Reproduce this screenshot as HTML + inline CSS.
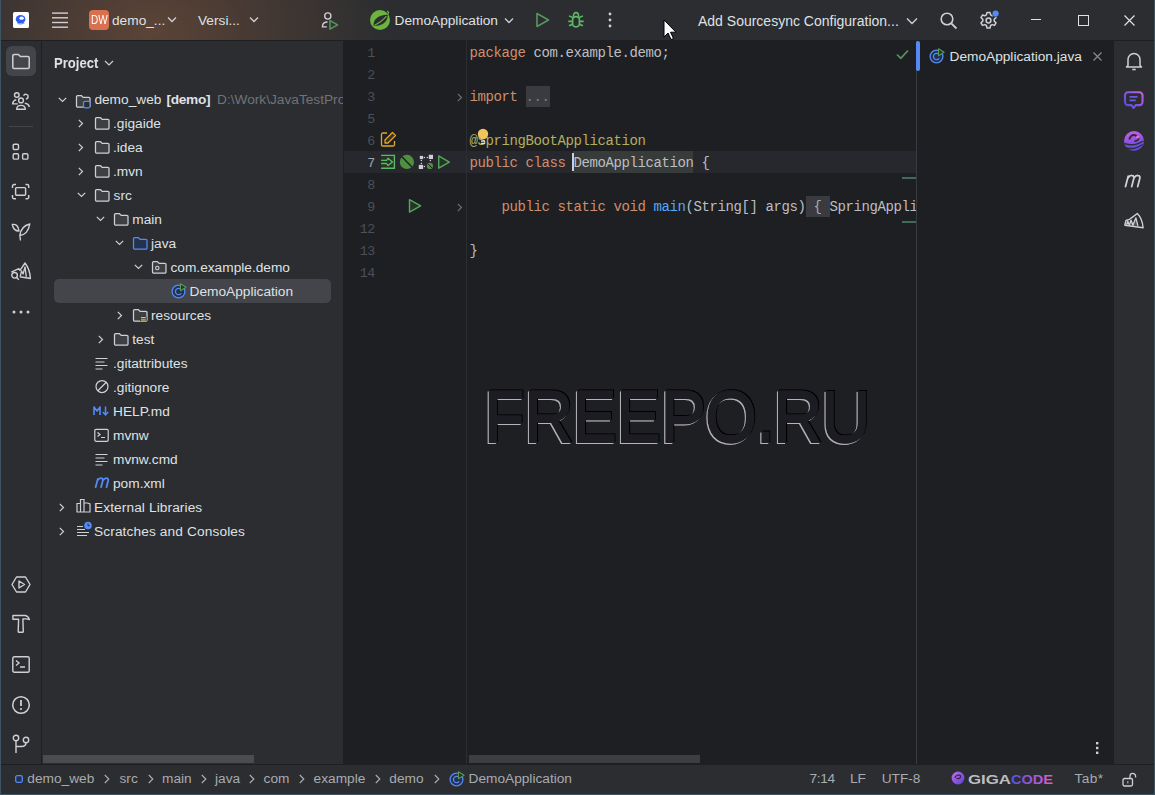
<!DOCTYPE html>
<html><head><meta charset="utf-8">
<style>
*{margin:0;padding:0;box-sizing:border-box}
html,body{width:1155px;height:795px;overflow:hidden;background:#2b2d30}
body{position:relative;font-family:"Liberation Sans",sans-serif;font-size:13.7px;color:#dfe1e5}
.a{position:absolute}
.t{position:absolute;white-space:nowrap;line-height:1}
svg{position:absolute;overflow:visible}
.m{position:absolute;white-space:pre;line-height:1;font-family:"Liberation Mono",monospace;font-size:14px;letter-spacing:-0.4px;color:#bcbec4}
</style></head><body>
<div class="a" style="left:0;top:0;width:1155px;height:40px;background:#2b2d30;overflow:hidden"><div class="a" style="left:0;top:0;width:1155px;height:40px;background:radial-gradient(ellipse 240px 170px at 150px 30px,rgba(94,69,55,0.95) 0%,rgba(84,64,53,0.7) 40%,rgba(43,45,48,0) 100%)"></div></div>
<div class="a" style="left:0;top:40px;width:1155px;height:1px;background:#1e1f22"></div>
<div class="a" style="left:0;top:41px;width:41px;height:723px;background:#2b2d30"></div>
<div class="a" style="left:41px;top:41px;width:1px;height:723px;background:#1e1f22"></div>
<div class="a" style="left:42px;top:41px;width:301px;height:723px;background:#2b2d30"></div>
<div class="a" style="left:343px;top:41px;width:573px;height:723px;background:#1e1f22"></div>
<div class="a" style="left:916px;top:41px;width:1px;height:723px;background:#393b40"></div>
<div class="a" style="left:917px;top:41px;width:196px;height:723px;background:#1e1f22"></div>
<div class="a" style="left:1113px;top:41px;width:1px;height:723px;background:#1e1f22"></div>
<div class="a" style="left:1114px;top:41px;width:41px;height:723px;background:#2b2d30"></div>
<div class="a" style="left:0;top:764px;width:1155px;height:1px;background:#1e1f22"></div>
<div class="a" style="left:0;top:765px;width:1155px;height:30px;background:#2b2d30"></div>
<svg style="left:13px;top:12px;" width="16" height="16" viewBox="0 0 16 16"><rect x="0" y="0" width="16" height="16" rx="1.5" fill="#fff"/><ellipse cx="7.6" cy="7.2" rx="4.8" ry="4.2" fill="#2f5cf0"/><ellipse cx="8.6" cy="6.2" rx="2.2" ry="1.6" fill="#fff"/><path d="M4.5 11.5q3 1.5 7-0.5" stroke="#6f8ff5" stroke-width="1" fill="none"/></svg>
<svg style="left:52px;top:12px;" width="16" height="16" viewBox="0 0 16 16"><rect x="0" y="0.4" width="16" height="1.4" fill="#ced0d6"/><rect x="0" y="5.1" width="16" height="1.4" fill="#ced0d6"/><rect x="0" y="9.8" width="16" height="1.4" fill="#ced0d6"/><rect x="0" y="14.5" width="16" height="1.4" fill="#ced0d6"/></svg>
<div class="a" style="left:89px;top:10px;width:20px;height:20px;border-radius:4px;background:#d9704f"></div>
<div class="t" style="left:89px;top:14.2px;width:20px;text-align:center;font-size:12.5px;color:#fff;letter-spacing:0px;transform:scaleX(0.8)">DW</div>
<div class="t" style="left:112.0px;top:14.16px;font-size:13.7px;color:#dfe1e5;font-weight:normal;">demo_...</div>
<svg style="left:167px;top:16px;" width="10" height="7" viewBox="0 0 10 7"><path d="M1 1.5l4 4 4-4" stroke="#ced0d6" stroke-width="1.3" fill="none"/></svg>
<div class="t" style="left:198.0px;top:14.16px;font-size:13.7px;color:#dfe1e5;font-weight:normal;">Versi...</div>
<svg style="left:249px;top:16px;" width="10" height="7" viewBox="0 0 10 7"><path d="M1 1.5l4 4 4-4" stroke="#ced0d6" stroke-width="1.3" fill="none"/></svg>
<svg style="left:320px;top:11px;" width="20" height="20" viewBox="0 0 20 20"><circle cx="7.8" cy="5" r="3.1" stroke="#ced0d6" stroke-width="1.35" fill="none"/><path d="M7.5 11c-3.2 0-5 1.6-5 4.2v.6h4.3" stroke="#ced0d6" stroke-width="1.35" fill="none"/><path d="M10 9.6v8.6l7.6-4.3z" stroke="#57965c" stroke-width="1.5" fill="#2c3a2e" stroke-linejoin="round"/></svg>
<svg style="left:369px;top:9px;" width="22" height="22" viewBox="0 0 22 22"><circle cx="11" cy="11" r="10" fill="#6cb33f"/><path d="M19.2 2.2l.3 2.2"/><path d="M4.5 16.8C4 11 8.5 6 18.8 5.5 18.8 13.5 13 17 4.5 16.8z" fill="#2b2d30"/><path d="M5.5 16.2Q12 13.5 17.5 7.2" stroke="#6cb33f" stroke-width="1.1" fill="none"/><path d="M18.3 1.8l1.2 1.6-.9 2.4" stroke="#6cb33f" stroke-width="1.2" fill="none"/></svg>
<div class="t" style="left:394.5px;top:14.16px;font-size:13.7px;color:#dfe1e5;font-weight:normal;">DemoApplication</div>
<svg style="left:504px;top:17px;" width="10" height="7" viewBox="0 0 10 7"><path d="M1 1.5l4 4 4-4" stroke="#ced0d6" stroke-width="1.3" fill="none"/></svg>
<svg style="left:535px;top:12px;" width="16" height="16" viewBox="0 0 16 16"><path d="M2 1.5v13l11.5-6.5z" stroke="#57965c" stroke-width="1.6" fill="none" stroke-linejoin="round"/></svg>
<svg style="left:566px;top:11px;" width="19" height="18" viewBox="0 0 19 18"><rect x="6.6" y="5.6" width="6.8" height="10.3" rx="3.3" stroke="#5fb865" stroke-width="1.6" fill="none"/><path d="M7.4 5.8Q7.4 1.6 10 1.6 12.6 1.6 12.6 5.8" stroke="#5fb865" stroke-width="1.6" fill="none"/><path d="M3 5Q5 5.4 6.6 6.6M17 5Q15 5.4 13.4 6.6M2.3 10.4H6.6M13.4 10.4H17.7M3 14.8Q5 14 6.6 12.8M17 14.8Q15 14 13.4 12.8" stroke="#5fb865" stroke-width="1.6" fill="none"/></svg>
<svg style="left:608px;top:12px;" width="4" height="16" viewBox="0 0 4 16"><circle cx="2" cy="2" r="1.4" fill="#ced0d6"/><circle cx="2" cy="8" r="1.4" fill="#ced0d6"/><circle cx="2" cy="14" r="1.4" fill="#ced0d6"/></svg>
<svg style="left:662.6px;top:19px;" width="14" height="22" viewBox="0 0 14 22"><path d="M1 1v17l4-4 3 6.5 2.5-1-3-6.3h5.5z" fill="#fff" stroke="#000" stroke-width="1"/></svg>
<div class="t" style="left:698.0px;top:13.90px;font-size:14px;color:#dfe1e5;font-weight:normal;">Add Sourcesync Configuration...</div>
<svg style="left:906px;top:17px;" width="12" height="8" viewBox="0 0 12 8"><path d="M1 1.5l5 5 5-5" stroke="#ced0d6" stroke-width="1.4" fill="none"/></svg>
<svg style="left:939px;top:11px;" width="20" height="20" viewBox="0 0 20 20"><circle cx="8" cy="8" r="5.8" stroke="#ced0d6" stroke-width="1.6" fill="none"/><path d="M12.3 12.3l5.2 5.2" stroke="#ced0d6" stroke-width="1.8"/></svg>
<svg style="left:979px;top:11px;" width="20" height="20" viewBox="0 0 20 20"><path d="M8 1.5h3l.6 2.4 1.6.9 2.3-.8 1.5 2.6-1.8 1.7v1.8l1.8 1.7-1.5 2.6-2.3-.8-1.6.9-.6 2.5h-3l-.6-2.5-1.6-.9-2.3.8-1.5-2.6 1.8-1.7v-1.8l-1.8-1.7 1.5-2.6 2.3.8 1.6-.9z" stroke="#ced0d6" stroke-width="1.5" fill="none" stroke-linejoin="round"/><circle cx="9.5" cy="9.5" r="2.4" stroke="#ced0d6" stroke-width="1.5" fill="none"/><circle cx="16.6" cy="2.6" r="3.6" fill="#2b2d30"/><circle cx="16.6" cy="2.6" r="3.1" fill="#548af7"/></svg>
<div class="a" style="left:1031px;top:19px;width:10px;height:1.3px;background:#dfe1e5"></div>
<div class="a" style="left:1078px;top:15px;width:10.5px;height:10.5px;border:1.3px solid #dfe1e5"></div>
<svg style="left:1124px;top:15px;" width="11" height="11" viewBox="0 0 11 11"><path d="M0.5 0.5l10 10M10.5 0.5l-10 10" stroke="#dfe1e5" stroke-width="1.2"/></svg>
<div class="a" style="left:6px;top:46px;width:30px;height:30px;border-radius:6px;background:#43454a"></div>
<svg style="left:11px;top:53px;" width="20" height="17" viewBox="0 0 20 17"><path d="M1.8 2.8a1.3 1.3 0 0 1 1.3-1.3h4.3l2 2h7.5a1.3 1.3 0 0 1 1.3 1.3v9.4a1.3 1.3 0 0 1-1.3 1.3H3.1a1.3 1.3 0 0 1-1.3-1.3z" stroke="#ced0d6" stroke-width="1.5" fill="none" stroke-linejoin="round"/></svg>
<svg style="left:8px;top:86px;" width="26" height="28" viewBox="0 0 26 28"><circle cx="8.8" cy="9" r="2.3" stroke="#ced0d6" stroke-width="1.4" fill="none"/><circle cx="13" cy="14.4" r="2.4" stroke="#ced0d6" stroke-width="1.4" fill="none"/><path d="M15.6 9.8A2.3 2.3 0 1 1 17.8 12.9" stroke="#ced0d6" stroke-width="1.4" fill="none"/><path d="M9.8 17.9H4.6Q5 14.3 8.3 13.6M8.6 23.2Q9 19.4 13 19.4T17.4 23.2Z" stroke="#ced0d6" stroke-width="1.4" fill="none" stroke-linejoin="round"/><path d="M16.8 17.2Q20.6 17.5 21.4 21" stroke="#ced0d6" stroke-width="1.4" fill="none"/></svg>
<div class="a" style="left:9px;top:126px;width:24px;height:1px;background:#43454a"></div>
<svg style="left:12px;top:143px;" width="18" height="18" viewBox="0 0 18 18"><rect x="1.2" y="1.2" width="5.3" height="5.3" rx="1.2" stroke="#ced0d6" stroke-width="1.4" fill="none"/><rect x="1.2" y="10.8" width="5.3" height="5.3" rx="1.2" stroke="#ced0d6" stroke-width="1.4" fill="none"/><rect x="10.6" y="10.8" width="5.3" height="5.3" rx="1.2" stroke="#ced0d6" stroke-width="1.4" fill="none"/></svg>
<svg style="left:11px;top:183px;" width="20" height="18" viewBox="0 0 20 18"><rect x="4.6" y="4.6" width="10" height="7.6" rx="1" stroke="#ced0d6" stroke-width="1.45" fill="none"/><path d="M1.5 5V3A1.5 1.5 0 0 1 3 1.5H5M14.5 1.5h1.7A1.5 1.5 0 0 1 17.7 3V5M17.7 12v2.2a1.5 1.5 0 0 1-1.5 1.5H14.5M5 15.7H3A1.5 1.5 0 0 1 1.5 14.2V12" stroke="#ced0d6" stroke-width="1.45" fill="none"/></svg>
<svg style="left:8px;top:218px;" width="26" height="26" viewBox="0 0 26 26"><path d="M4.3 6.5Q10 5.5 11 13 5.5 13 4.3 6.5Z" stroke="#ced0d6" stroke-width="1.4" fill="none" stroke-linejoin="round"/><path d="M21.8 6Q13 8 11.8 17.5 20 16.5 21.8 6ZM11.8 17L12.5 22.5" stroke="#ced0d6" stroke-width="1.4" fill="none" stroke-linejoin="round"/></svg>
<svg style="left:8px;top:258px;" width="26" height="26" viewBox="0 0 26 26"><path d="M3.3 14.2L10.8 10.6 12 12.4 17 5Q22 11.5 22.4 20.5L11.8 18.8" stroke="#ced0d6" stroke-width="1.4" fill="none" stroke-linejoin="round"/><path d="M12.2 18.3L13.6 13 15.1 16 17 8.8 18.3 18.8" stroke="#ced0d6" stroke-width="1.3" fill="none" stroke-linejoin="round"/><circle cx="6.6" cy="17.3" r="2.8" stroke="#ced0d6" stroke-width="1.4" fill="none"/><path d="M8.6 19.5L10.8 21.8" stroke="#ced0d6" stroke-width="1.4"/></svg>
<svg style="left:12px;top:310px;" width="18" height="4" viewBox="0 0 18 4"><circle cx="2" cy="2" r="1.5" fill="#ced0d6"/><circle cx="9" cy="2" r="1.5" fill="#ced0d6"/><circle cx="16" cy="2" r="1.5" fill="#ced0d6"/></svg>
<svg style="left:11px;top:576px;" width="20" height="17" viewBox="0 0 20 17"><path d="M5.5 1h9l4.5 7.5-4.5 7.5h-9L1 8.5z" stroke="#ced0d6" stroke-width="1.4" fill="none" stroke-linejoin="round"/><path d="M8 5v7l5.5-3.5z" stroke="#ced0d6" stroke-width="1.4" fill="none" stroke-linejoin="round"/></svg>
<svg style="left:12px;top:614px;" width="18" height="20" viewBox="0 0 18 20"><path d="M0.9 1.5H13.3Q16.2 1.9 17.4 5.6 15.6 4.7 13 4.9H10.9L10.9 5.5 11.3 17.4Q11.3 18.3 10.4 18.3H7.1Q6.2 18.3 6.2 17.4L6.6 5.5 6.6 5.3H0.9Z" stroke="#ced0d6" stroke-width="1.4" fill="none" stroke-linejoin="round"/></svg>
<svg style="left:12px;top:656px;" width="18" height="17" viewBox="0 0 18 17"><rect x="0.8" y="0.8" width="16.4" height="15.4" rx="1.5" stroke="#ced0d6" stroke-width="1.4" fill="none"/><path d="M4 4.5l3 2.5-3 2.5M8 11h5" stroke="#ced0d6" stroke-width="1.4" fill="none"/></svg>
<svg style="left:11px;top:695px;" width="20" height="20" viewBox="0 0 20 20"><circle cx="10" cy="10" r="8.3" stroke="#ced0d6" stroke-width="1.5" fill="none"/><path d="M10 5v6" stroke="#ced0d6" stroke-width="1.8"/><circle cx="10" cy="14" r="1.1" fill="#ced0d6"/></svg>
<svg style="left:12px;top:734px;" width="18" height="20" viewBox="0 0 18 20"><circle cx="4" cy="4" r="2.7" stroke="#ced0d6" stroke-width="1.4" fill="none"/><circle cx="14" cy="6" r="2.7" stroke="#ced0d6" stroke-width="1.4" fill="none"/><path d="M4 6.7V19M4 12.5h5.5q4.5 0 4.5-4" stroke="#ced0d6" stroke-width="1.4" fill="none"/></svg>
<div class="t" style="left:54.3px;top:55.66px;font-size:14.4px;color:#dfe1e5;font-weight:bold;transform:scaleX(0.91);transform-origin:0 0">Project</div>
<svg style="left:104px;top:59.5px;" width="10" height="6" viewBox="0 0 10 6"><path d="M1 1l4 4 4-4" stroke="#ced0d6" stroke-width="1.2" fill="none"/></svg>
<div class="a" style="left:54px;top:279px;width:277px;height:24px;border-radius:5px;background:#43454a"></div>
<svg style="left:58px;top:96.5px;" width="9" height="6" viewBox="0 0 9 6"><path d="M0.8 0.8l3.7 3.7 3.7-3.7" stroke="#ced0d6" stroke-width="1.2" fill="none"/></svg>
<svg style="left:75px;top:93.5px;" width="16" height="14" viewBox="0 0 16 14"><path d="M1.5 2.7a1.2 1.2 0 0 1 1.2-1.2h3.6l1.8 1.9h5.7a1.2 1.2 0 0 1 1.2 1.2v7.3a1.2 1.2 0 0 1-1.2 1.2H2.7a1.2 1.2 0 0 1-1.2-1.2z" stroke="#ced0d6" stroke-width="1.25" fill="#3d3f43" stroke-linejoin="round"/><rect x="8.5" y="7.3" width="6.5" height="6.5" rx="1.5" fill="#2b2d30" stroke="#548af7" stroke-width="1.3"/></svg>
<div class="t" style="left:94.4px;top:92.56px;font-size:13.7px;color:#dfe1e5;font-weight:normal;">demo_web</div>
<div class="t" style="left:166.6px;top:92.56px;font-size:13.7px;color:#dfe1e5;font-weight:bold;letter-spacing:-0.35px">[demo]</div>
<div class="a" style="left:217px;top:90.56px;width:126px;height:18px;overflow:hidden"><div class="t" style="left:0;top:2px;font-size:13.7px;color:#6f737a">D:\Work\JavaTestProjects</div></div>
<svg style="left:78px;top:119.19999999999999px;" width="6" height="9" viewBox="0 0 6 9"><path d="M0.8 0.8l3.7 3.7-3.7 3.7" stroke="#ced0d6" stroke-width="1.2" fill="none"/></svg>
<svg style="left:94px;top:116.19999999999999px;" width="16" height="14" viewBox="0 0 16 14"><path d="M1.5 2.7a1.2 1.2 0 0 1 1.2-1.2h3.6l1.8 1.9h5.7a1.2 1.2 0 0 1 1.2 1.2v7.3a1.2 1.2 0 0 1-1.2 1.2H2.7a1.2 1.2 0 0 1-1.2-1.2z" stroke="#ced0d6" stroke-width="1.25" fill="#3d3f43" stroke-linejoin="round"/></svg>
<div class="t" style="left:113.0px;top:116.55px;font-size:13.7px;color:#dfe1e5;font-weight:normal;">.gigaide</div>
<svg style="left:78px;top:143.2px;" width="6" height="9" viewBox="0 0 6 9"><path d="M0.8 0.8l3.7 3.7-3.7 3.7" stroke="#ced0d6" stroke-width="1.2" fill="none"/></svg>
<svg style="left:94px;top:140.2px;" width="16" height="14" viewBox="0 0 16 14"><path d="M1.5 2.7a1.2 1.2 0 0 1 1.2-1.2h3.6l1.8 1.9h5.7a1.2 1.2 0 0 1 1.2 1.2v7.3a1.2 1.2 0 0 1-1.2 1.2H2.7a1.2 1.2 0 0 1-1.2-1.2z" stroke="#ced0d6" stroke-width="1.25" fill="#3d3f43" stroke-linejoin="round"/></svg>
<div class="t" style="left:113.0px;top:140.55px;font-size:13.7px;color:#dfe1e5;font-weight:normal;">.idea</div>
<svg style="left:78px;top:167.2px;" width="6" height="9" viewBox="0 0 6 9"><path d="M0.8 0.8l3.7 3.7-3.7 3.7" stroke="#ced0d6" stroke-width="1.2" fill="none"/></svg>
<svg style="left:94px;top:164.2px;" width="16" height="14" viewBox="0 0 16 14"><path d="M1.5 2.7a1.2 1.2 0 0 1 1.2-1.2h3.6l1.8 1.9h5.7a1.2 1.2 0 0 1 1.2 1.2v7.3a1.2 1.2 0 0 1-1.2 1.2H2.7a1.2 1.2 0 0 1-1.2-1.2z" stroke="#ced0d6" stroke-width="1.25" fill="#3d3f43" stroke-linejoin="round"/></svg>
<div class="t" style="left:113.0px;top:164.55px;font-size:13.7px;color:#dfe1e5;font-weight:normal;">.mvn</div>
<svg style="left:77px;top:192.2px;" width="9" height="6" viewBox="0 0 9 6"><path d="M0.8 0.8l3.7 3.7 3.7-3.7" stroke="#ced0d6" stroke-width="1.2" fill="none"/></svg>
<svg style="left:94px;top:188.2px;" width="16" height="14" viewBox="0 0 16 14"><path d="M1.5 2.7a1.2 1.2 0 0 1 1.2-1.2h3.6l1.8 1.9h5.7a1.2 1.2 0 0 1 1.2 1.2v7.3a1.2 1.2 0 0 1-1.2 1.2H2.7a1.2 1.2 0 0 1-1.2-1.2z" stroke="#ced0d6" stroke-width="1.25" fill="#3d3f43" stroke-linejoin="round"/></svg>
<div class="t" style="left:113.6px;top:188.55px;font-size:13.7px;color:#dfe1e5;font-weight:normal;">src</div>
<svg style="left:96px;top:216.2px;" width="9" height="6" viewBox="0 0 9 6"><path d="M0.8 0.8l3.7 3.7 3.7-3.7" stroke="#ced0d6" stroke-width="1.2" fill="none"/></svg>
<svg style="left:113px;top:212.2px;" width="16" height="14" viewBox="0 0 16 14"><path d="M1.5 2.7a1.2 1.2 0 0 1 1.2-1.2h3.6l1.8 1.9h5.7a1.2 1.2 0 0 1 1.2 1.2v7.3a1.2 1.2 0 0 1-1.2 1.2H2.7a1.2 1.2 0 0 1-1.2-1.2z" stroke="#ced0d6" stroke-width="1.25" fill="#3d3f43" stroke-linejoin="round"/></svg>
<div class="t" style="left:132.3px;top:212.55px;font-size:13.7px;color:#dfe1e5;font-weight:normal;">main</div>
<svg style="left:115px;top:240.2px;" width="9" height="6" viewBox="0 0 9 6"><path d="M0.8 0.8l3.7 3.7 3.7-3.7" stroke="#ced0d6" stroke-width="1.2" fill="none"/></svg>
<svg style="left:132px;top:236.2px;" width="16" height="14" viewBox="0 0 16 14"><path d="M1.5 2.7a1.2 1.2 0 0 1 1.2-1.2h3.6l1.8 1.9h5.7a1.2 1.2 0 0 1 1.2 1.2v7.3a1.2 1.2 0 0 1-1.2 1.2H2.7a1.2 1.2 0 0 1-1.2-1.2z" stroke="#548af7" stroke-width="1.25" fill="#25324d" stroke-linejoin="round"/></svg>
<div class="t" style="left:151.0px;top:236.55px;font-size:13.7px;color:#dfe1e5;font-weight:normal;">java</div>
<svg style="left:134px;top:264.2px;" width="9" height="6" viewBox="0 0 9 6"><path d="M0.8 0.8l3.7 3.7 3.7-3.7" stroke="#ced0d6" stroke-width="1.2" fill="none"/></svg>
<svg style="left:151px;top:260.2px;" width="16" height="14" viewBox="0 0 16 14"><path d="M1.5 2.7a1.2 1.2 0 0 1 1.2-1.2h3.6l1.8 1.9h5.7a1.2 1.2 0 0 1 1.2 1.2v7.3a1.2 1.2 0 0 1-1.2 1.2H2.7a1.2 1.2 0 0 1-1.2-1.2z" stroke="#ced0d6" stroke-width="1.25" fill="#3d3f43" stroke-linejoin="round"/><circle cx="6.3" cy="8" r="1.7" stroke="#ced0d6" stroke-width="1.1" fill="none"/></svg>
<div class="t" style="left:170.5px;top:260.56px;font-size:13.7px;color:#dfe1e5;font-weight:normal;">com.example.demo</div>
<svg style="left:171px;top:283px;" width="16" height="16" viewBox="0 0 16 16"><circle cx="7.5" cy="8.5" r="6.4" fill="#25324d" stroke="#548af7" stroke-width="1.3"/><path d="M10.2 6.6a3.2 3.2 0 1 0 0 3.8" stroke="#548af7" stroke-width="1.3" fill="none"/><path d="M9.5 0.8v7l5.6-3.5z" fill="#253627" stroke="#57965c" stroke-width="1.1" stroke-linejoin="round"/></svg>
<div class="t" style="left:189.6px;top:284.56px;font-size:13.7px;color:#dfe1e5;font-weight:normal;">DemoApplication</div>
<svg style="left:117px;top:311.2px;" width="6" height="9" viewBox="0 0 6 9"><path d="M0.8 0.8l3.7 3.7-3.7 3.7" stroke="#ced0d6" stroke-width="1.2" fill="none"/></svg>
<svg style="left:132px;top:308.2px;" width="16" height="14" viewBox="0 0 16 14"><path d="M1.5 2.7a1.2 1.2 0 0 1 1.2-1.2h3.6l1.8 1.9h5.7a1.2 1.2 0 0 1 1.2 1.2v7.3a1.2 1.2 0 0 1-1.2 1.2H2.7a1.2 1.2 0 0 1-1.2-1.2z" stroke="#ced0d6" stroke-width="1.25" fill="#3d3f43" stroke-linejoin="round"/><rect x="8" y="8.6" width="6.5" height="4.6" fill="#2b2d30"/><path d="M8.8 9.5h5M8.8 11.2h5M8.8 12.9h5" stroke="#e5c15a" stroke-width="1"/></svg>
<div class="t" style="left:151.0px;top:308.56px;font-size:13.7px;color:#dfe1e5;font-weight:normal;">resources</div>
<svg style="left:98px;top:335.2px;" width="6" height="9" viewBox="0 0 6 9"><path d="M0.8 0.8l3.7 3.7-3.7 3.7" stroke="#ced0d6" stroke-width="1.2" fill="none"/></svg>
<svg style="left:113px;top:332.2px;" width="16" height="14" viewBox="0 0 16 14"><path d="M1.5 2.7a1.2 1.2 0 0 1 1.2-1.2h3.6l1.8 1.9h5.7a1.2 1.2 0 0 1 1.2 1.2v7.3a1.2 1.2 0 0 1-1.2 1.2H2.7a1.2 1.2 0 0 1-1.2-1.2z" stroke="#ced0d6" stroke-width="1.25" fill="#3d3f43" stroke-linejoin="round"/></svg>
<div class="t" style="left:132.3px;top:332.56px;font-size:13.7px;color:#dfe1e5;font-weight:normal;">test</div>
<svg style="left:94px;top:355.7px;" width="15" height="15" viewBox="0 0 15 15"><path d="M1.5 2.5h12M1.5 6h9M1.5 9.5h12M1.5 13h7" stroke="#ced0d6" stroke-width="1.2"/></svg>
<div class="t" style="left:113.0px;top:356.56px;font-size:13.7px;color:#dfe1e5;font-weight:normal;">.gitattributes</div>
<svg style="left:94.5px;top:379.4px;" width="15" height="15" viewBox="0 0 15 15"><circle cx="7" cy="7.5" r="6" stroke="#ced0d6" stroke-width="1.25" fill="none"/><path d="M2.8 11.7l8.5-8.5" stroke="#ced0d6" stroke-width="1.25"/></svg>
<div class="t" style="left:113.0px;top:380.56px;font-size:13.7px;color:#dfe1e5;font-weight:normal;">.gitignore</div>
<svg style="left:93px;top:405.2px;" width="17" height="12" viewBox="0 0 17 12"><path d="M1 10V2l3 4 3-4v8" stroke="#548af7" stroke-width="1.6" fill="none" stroke-linejoin="round"/><path d="M12.5 1.5v8M9.8 7l2.7 3 2.7-3" stroke="#548af7" stroke-width="1.5" fill="none"/></svg>
<div class="t" style="left:113.0px;top:404.56px;font-size:13.7px;color:#dfe1e5;font-weight:normal;">HELP.md</div>
<svg style="left:94px;top:427.7px;" width="15" height="15" viewBox="0 0 15 15"><rect x="0.8" y="1.3" width="13.4" height="12" rx="1.3" stroke="#ced0d6" stroke-width="1.2" fill="none"/><path d="M3.5 4.5l2.5 2-2.5 2M7 9.5h4" stroke="#ced0d6" stroke-width="1.2" fill="none"/></svg>
<div class="t" style="left:113.0px;top:428.56px;font-size:13.7px;color:#dfe1e5;font-weight:normal;">mvnw</div>
<svg style="left:94px;top:451.7px;" width="15" height="15" viewBox="0 0 15 15"><path d="M1.5 2.5h12M1.5 6h9M1.5 9.5h12M1.5 13h7" stroke="#ced0d6" stroke-width="1.2"/></svg>
<div class="t" style="left:113.0px;top:452.56px;font-size:13.7px;color:#dfe1e5;font-weight:normal;">mvnw.cmd</div>
<svg style="left:94px;top:476px;" width="16" height="14" viewBox="0 0 16 14"><path d="M1.6 11.2L3.8 3M3.6 4.4C4.7 2.6 6 2.1 7.2 2.2c1.6.2 1.9 1.2 1.5 2.8L7.1 11.2M9 4.4c1.1-1.8 2.4-2.3 3.6-2.2 1.6.2 1.9 1.2 1.5 2.8l-1.6 6.2" stroke="#548af7" stroke-width="1.8" fill="none" stroke-linecap="round"/></svg>
<div class="t" style="left:113.0px;top:476.56px;font-size:13.7px;color:#dfe1e5;font-weight:normal;">pom.xml</div>
<svg style="left:59px;top:503.20000000000005px;" width="6" height="9" viewBox="0 0 6 9"><path d="M0.8 0.8l3.7 3.7-3.7 3.7" stroke="#ced0d6" stroke-width="1.2" fill="none"/></svg>
<svg style="left:76px;top:498.20000000000005px;" width="15" height="15" viewBox="0 0 15 15"><path d="M1 14V5.5h3.5V14M4.5 14V1.5h3.5V14M8 14V5h3.5l2.5 1V14zM0.5 14h14" stroke="#ced0d6" stroke-width="1.2" fill="none"/></svg>
<div class="t" style="left:94.0px;top:500.56px;font-size:13.7px;color:#dfe1e5;font-weight:normal;letter-spacing:0.1px">External Libraries</div>
<svg style="left:59px;top:527.2px;" width="6" height="9" viewBox="0 0 6 9"><path d="M0.8 0.8l3.7 3.7-3.7 3.7" stroke="#ced0d6" stroke-width="1.2" fill="none"/></svg>
<svg style="left:76px;top:521.2px;" width="16" height="16" viewBox="0 0 16 16"><path d="M1 5.5h6M1 8.5h8M1 11.5h12M1 14.5h10" stroke="#ced0d6" stroke-width="1.2"/><circle cx="12" cy="4.5" r="3.8" fill="#548af7"/><path d="M12 2.5v2.2h1.6" stroke="#2b2d30" stroke-width="1" fill="none"/></svg>
<div class="t" style="left:94.0px;top:524.56px;font-size:13.7px;color:#dfe1e5;font-weight:normal;letter-spacing:0.12px">Scratches and Consoles</div>
<div class="a" style="left:43px;top:755px;width:211px;height:8px;background:#4a4c50"></div>
<div class="a" style="left:344px;top:151px;width:572px;height:22px;background:#26282e"></div>
<div class="a" style="left:466px;top:41px;width:1px;height:723px;background:#2b2d30"></div>
<div class="t" style="left:334px;width:41px;text-align:right;top:46.89px;font-family:'Liberation Mono',monospace;font-size:13.3px;letter-spacing:-0.3px;color:#4b5059">1</div>
<div class="t" style="left:334px;width:41px;text-align:right;top:68.89px;font-family:'Liberation Mono',monospace;font-size:13.3px;letter-spacing:-0.3px;color:#4b5059">2</div>
<div class="t" style="left:334px;width:41px;text-align:right;top:90.89px;font-family:'Liberation Mono',monospace;font-size:13.3px;letter-spacing:-0.3px;color:#4b5059">3</div>
<div class="t" style="left:334px;width:41px;text-align:right;top:112.89px;font-family:'Liberation Mono',monospace;font-size:13.3px;letter-spacing:-0.3px;color:#4b5059">5</div>
<div class="t" style="left:334px;width:41px;text-align:right;top:134.89px;font-family:'Liberation Mono',monospace;font-size:13.3px;letter-spacing:-0.3px;color:#4b5059">6</div>
<div class="t" style="left:334px;width:41px;text-align:right;top:156.89px;font-family:'Liberation Mono',monospace;font-size:13.3px;letter-spacing:-0.3px;color:#a1a3ab">7</div>
<div class="t" style="left:334px;width:41px;text-align:right;top:178.89px;font-family:'Liberation Mono',monospace;font-size:13.3px;letter-spacing:-0.3px;color:#4b5059">8</div>
<div class="t" style="left:334px;width:41px;text-align:right;top:200.89px;font-family:'Liberation Mono',monospace;font-size:13.3px;letter-spacing:-0.3px;color:#4b5059">9</div>
<div class="t" style="left:334px;width:41px;text-align:right;top:222.89px;font-family:'Liberation Mono',monospace;font-size:13.3px;letter-spacing:-0.3px;color:#4b5059">12</div>
<div class="t" style="left:334px;width:41px;text-align:right;top:244.89px;font-family:'Liberation Mono',monospace;font-size:13.3px;letter-spacing:-0.3px;color:#4b5059">13</div>
<div class="t" style="left:334px;width:41px;text-align:right;top:266.89px;font-family:'Liberation Mono',monospace;font-size:13.3px;letter-spacing:-0.3px;color:#4b5059">14</div>
<div class="m" style="left:469.5px;top:46.36px"><span style="color:#cf8e6d">package</span><span style="color:#bcbec4"> com.example.demo;</span></div>
<div class="a" style="left:525.5px;top:86px;width:24px;height:21px;background:#393b40"></div>
<div class="m" style="left:469.5px;top:90.36px"><span style="color:#cf8e6d">import</span><span style="color:#bcbec4"> </span><span style="color:#7a7e85">...</span></div>
<div class="m" style="left:469.5px;top:134.36px"><span style="color:#b3ae60">@SpringBootApplication</span></div>
<div class="a" style="left:572.5px;top:151px;width:120px;height:22px;background:#373b39"></div>
<div class="m" style="left:469.5px;top:156.36px"><span style="color:#cf8e6d">public class </span><span style="color:#bcbec4">DemoApplication</span><span style="color:#bcbec4"> {</span></div>
<div class="a" style="left:572px;top:153px;width:2px;height:18px;background:#ced0d6"></div>
<div class="a" style="left:805.5px;top:196px;width:24px;height:21px;background:#393b40"></div>
<div class="a" style="left:469px;top:195px;width:447px;height:22px;overflow:hidden"><div class="m" style="left:32.5px;top:5.36px"><span style="color:#cf8e6d">public static void </span><span style="color:#56a8f5">main</span><span style="color:#bcbec4">(String[] args) </span><span style="color:#a9abb1">{</span><span style="color:#bcbec4"> SpringApplication.run(DemoApplication.class, args); }</span></div></div>
<div class="m" style="left:469.5px;top:244.36px"><span style="color:#bcbec4">}</span></div>
<svg style="left:476px;top:128px;" width="14" height="17" viewBox="0 0 14 17"><circle cx="7" cy="6" r="5.2" fill="#f2c55c"/><path d="M5 13.2h4M5 15.4h4" stroke="#dfe1e5" stroke-width="1.2"/></svg>
<div class="a" style="left:902px;top:177px;width:14px;height:2px;background:#3e6b5a"></div>
<div class="a" style="left:902px;top:221px;width:14px;height:2px;background:#3e6b5a"></div>
<svg style="left:896px;top:49px;" width="13" height="11" viewBox="0 0 13 11"><path d="M1 5.5l3.8 3.8L12 1.5" stroke="#57965c" stroke-width="1.7" fill="none"/></svg>
<svg style="left:380px;top:131px;" width="17" height="17" viewBox="0 0 17 17"><path d="M7 2H2.8A1.3 1.3 0 0 0 1.5 3.3v10.4A1.3 1.3 0 0 0 2.8 15h10.4a1.3 1.3 0 0 0 1.3-1.3V10" stroke="#e5a52b" stroke-width="1.3" fill="none"/><path d="M12.5 1.5l3 3-7.5 7.5H5v-3z" stroke="#e5a52b" stroke-width="1.3" fill="#3a3020" stroke-linejoin="round"/></svg>
<svg style="left:380px;top:154px;" width="17" height="16" viewBox="0 0 17 16"><rect x="1.1" y="1.4" width="13.3" height="12.9" fill="#243626"/><path d="M1.1 1.4H14.4V14.3H1.1" stroke="#5fb865" stroke-width="1.4" fill="none"/><path d="M1.1 6.4H6.6L8 4.3 12.5 8 8 11.6 6.6 9.5H1.1" stroke="#5fb865" stroke-width="1.3" fill="none" stroke-linejoin="round"/></svg>
<svg style="left:399px;top:154px;" width="16" height="16" viewBox="0 0 16 16"><circle cx="7.9" cy="7.9" r="7.1" fill="#4f8f40"/><path d="M2.9 2.7L12.9 13" stroke="#1e1f22" stroke-width="1.4"/></svg>
<svg style="left:418px;top:154px;" width="16" height="16" viewBox="0 0 16 16"><rect x="1.8" y="1.9" width="3.3" height="3.2" fill="#ced0d6"/><rect x="10.8" y="0.8" width="4.2" height="4.2" fill="#ced0d6"/><rect x="0.8" y="10.9" width="4.3" height="4.1" fill="#ced0d6"/><circle cx="6.4" cy="3.4" r="0.75" fill="#ced0d6"/><circle cx="9.3" cy="3.4" r="0.75" fill="#ced0d6"/><circle cx="3.4" cy="6.4" r="0.75" fill="#ced0d6"/><circle cx="12.4" cy="6.4" r="0.75" fill="#ced0d6"/><circle cx="3.4" cy="9.5" r="0.75" fill="#ced0d6"/><circle cx="6.4" cy="12.4" r="0.75" fill="#ced0d6"/><circle cx="11.9" cy="11.9" r="3.1" fill="#4f8f40"/><path d="M9.8 9.6L14 14.1" stroke="#1e1f22" stroke-width="1"/></svg>
<svg style="left:437px;top:154px;" width="14" height="16" viewBox="0 0 14 16"><path d="M1.7 1.9V14.2L12.3 8.05z" fill="#233526" stroke="#58a55d" stroke-width="1.4" stroke-linejoin="round"/></svg>
<svg style="left:408px;top:198px;" width="14" height="16" viewBox="0 0 14 16"><path d="M1.5 1.7V14.1L12.6 7.9z" fill="#233526" stroke="#58a55d" stroke-width="1.4" stroke-linejoin="round"/></svg>
<svg style="left:457px;top:92.5px;" width="6" height="9" viewBox="0 0 6 9"><path d="M0.8 0.8l3.7 3.7-3.7 3.7" stroke="#6f737a" stroke-width="1.1" fill="none"/></svg>
<svg style="left:457px;top:202.5px;" width="6" height="9" viewBox="0 0 6 9"><path d="M0.8 0.8l3.7 3.7-3.7 3.7" stroke="#6f737a" stroke-width="1.1" fill="none"/></svg>
<div class="a" style="left:469px;top:755px;width:231px;height:8px;background:#3c3e42"></div>
<svg width="0" height="0" style="left:0;top:0"><filter id="emb" x="-5%" y="-20%" width="110%" height="140%"><feMorphology operator="erode" radius="0.8 0.3" in="SourceAlpha" result="A"/><feOffset in="A" dx="-1" dy="1" result="L"/><feFlood flood-color="#b4b5b8" result="lf"/><feComposite in="lf" in2="L" operator="in" result="Lc"/><feOffset in="A" dx="1" dy="-1" result="D"/><feFlood flood-color="#000000" result="df"/><feComposite in="df" in2="D" operator="in" result="Dc"/><feFlood flood-color="#1e1f22" result="tf"/><feComposite in="tf" in2="A" operator="in" result="Tc"/><feMerge><feMergeNode in="Lc"/><feMergeNode in="Dc"/><feMergeNode in="Tc"/></feMerge></filter></svg>
<div class="t" style="left:483.3px;top:379.3px;font-size:76px;font-weight:bold;color:#fff;letter-spacing:-3px;transform:scaleX(0.925);transform-origin:0 0;filter:url(#emb)">FREEPO.RU</div>
<div class="a" style="left:916px;top:41px;width:4px;height:30px;border-radius:2px;background:#548af7"></div>
<svg style="left:929px;top:48px;" width="16" height="16" viewBox="0 0 16 16"><circle cx="7.5" cy="8.5" r="6.4" fill="#25324d" stroke="#548af7" stroke-width="1.3"/><path d="M10.2 6.6a3.2 3.2 0 1 0 0 3.8" stroke="#548af7" stroke-width="1.3" fill="none"/><path d="M9.5 0.8v7l5.6-3.5z" fill="#253627" stroke="#57965c" stroke-width="1.1" stroke-linejoin="round"/></svg>
<div class="t" style="left:949.5px;top:49.66px;font-size:13.7px;color:#dfe1e5;font-weight:normal;">DemoApplication.java</div>
<svg style="left:1093px;top:52px;" width="9" height="9" viewBox="0 0 9 9"><path d="M0.5 0.5l8 8M8.5 0.5l-8 8" stroke="#8c8e93" stroke-width="1.1"/></svg>
<svg style="left:1096px;top:742px;" width="3" height="13" viewBox="0 0 3 13"><rect x="0" y="0" width="2.4" height="2.4" fill="#ced0d6"/><rect x="0" y="4.8" width="2.4" height="2.4" fill="#ced0d6"/><rect x="0" y="9.6" width="2.4" height="2.4" fill="#ced0d6"/></svg>
<svg style="left:1124px;top:51px;" width="20" height="20" viewBox="0 0 20 20"><path d="M4 14.5V8.5a6 6 0 0 1 12 0v6l1.5 1.5h-15z" stroke="#ced0d6" stroke-width="1.5" fill="none" stroke-linejoin="round"/><path d="M8.3 18.5h3.4" stroke="#ced0d6" stroke-width="1.6"/></svg>
<svg style="left:1123px;top:90px" width="21" height="21" viewBox="0 0 21 21"><defs><linearGradient id="g1" x1="0" y1="1" x2="1" y2="0"><stop offset="0" stop-color="#4a48e6"/><stop offset="1" stop-color="#c85fe0"/></linearGradient></defs><path d="M5 2.3h11.5a3 3 0 0 1 3 3v6.8a3 3 0 0 1-3 3h-3.8l-2.2 2.9-2.2-2.9H5a3 3 0 0 1-3-3V5.3a3 3 0 0 1 3-3z" stroke="url(#g1)" stroke-width="2.1" fill="none" stroke-linejoin="round"/><path d="M6.5 6.8h8M6.5 10.3h6.3" stroke="#6a58ea" stroke-width="1.7"/></svg>
<svg style="left:1123px;top:130px" width="22" height="22" viewBox="0 0 22 22"><defs><linearGradient id="g3" x1="0.3" y1="0" x2="0.5" y2="1"><stop offset="0" stop-color="#c95fe0"/><stop offset="1" stop-color="#5548e0"/></linearGradient></defs><circle cx="11" cy="11" r="10" fill="url(#g3)"/><path d="M6.3 9.5Q7.5 4 12.5 5.2M12 5.5q4 .5 3.5 3.5-1 2.5-4 2" stroke="#2b2d30" stroke-width="1.9" fill="none"/><circle cx="14.8" cy="6.8" r="1.6" fill="#e070e8"/><path d="M1.5 13.5q9 3.5 19-2.5M3.5 18q8 2 16-3.5" stroke="#2b2d30" stroke-width="1.4" fill="none"/></svg>
<svg style="left:1124px;top:174px;" width="20" height="14" viewBox="0 0 20 14"><path d="M1.5 12.6L4.2 2.2M4 4C5.3 1.9 6.8 1.3 8.1 1.5c1.8.2 2 1.4 1.6 3.2l-2 7.9M10 4c1.3-2.1 2.8-2.7 4.1-2.5 1.8.2 2 1.4 1.6 3.2l-2 7.9" stroke="#ced0d6" stroke-width="1.8" fill="none" stroke-linecap="round"/></svg>
<svg style="left:1123px;top:212px;" width="22" height="18" viewBox="0 0 22 18"><path d="M1.8 13.2L3 8.5l3.5-1.2 3-2.2 4.8-3.6q5 5 5.8 14.3z" stroke="#ced0d6" stroke-width="1.4" fill="none" stroke-linejoin="round"/><path d="M3.5 12.8l1.3-3.5 1.5 3.6 1.8-4.8 1.8 5.2 3-7.5 2 8" stroke="#ced0d6" stroke-width="1.3" fill="#ced0d6" fill-opacity="0.25" stroke-linejoin="round"/></svg>
<svg style="left:15px;top:775px;" width="8" height="8" viewBox="0 0 8 8"><rect x="0.7" y="0.7" width="6.6" height="6.6" rx="1.5" fill="#25324d" stroke="#548af7" stroke-width="1.3"/></svg>
<div class="t" style="left:27.3px;top:771.86px;font-size:13.7px;color:#a8abb0;font-weight:normal;">demo_web</div>
<div class="t" style="left:119.5px;top:771.86px;font-size:13.7px;color:#a8abb0;font-weight:normal;">src</div>
<div class="t" style="left:162.0px;top:771.86px;font-size:13.7px;color:#a8abb0;font-weight:normal;">main</div>
<div class="t" style="left:215.0px;top:771.86px;font-size:13.7px;color:#a8abb0;font-weight:normal;">java</div>
<div class="t" style="left:263.6px;top:771.86px;font-size:13.7px;color:#a8abb0;font-weight:normal;">com</div>
<div class="t" style="left:313.6px;top:771.86px;font-size:13.7px;color:#a8abb0;font-weight:normal;">example</div>
<div class="t" style="left:389.3px;top:771.86px;font-size:13.7px;color:#a8abb0;font-weight:normal;">demo</div>
<svg style="left:104px;top:774px;" width="6" height="10" viewBox="0 0 6 10"><path d="M0.8 1l4 4-4 4" stroke="#a8abb0" stroke-width="1.2" fill="none"/></svg>
<svg style="left:147.5px;top:774px;" width="6" height="10" viewBox="0 0 6 10"><path d="M0.8 1l4 4-4 4" stroke="#a8abb0" stroke-width="1.2" fill="none"/></svg>
<svg style="left:201px;top:774px;" width="6" height="10" viewBox="0 0 6 10"><path d="M0.8 1l4 4-4 4" stroke="#a8abb0" stroke-width="1.2" fill="none"/></svg>
<svg style="left:249px;top:774px;" width="6" height="10" viewBox="0 0 6 10"><path d="M0.8 1l4 4-4 4" stroke="#a8abb0" stroke-width="1.2" fill="none"/></svg>
<svg style="left:298.6px;top:774px;" width="6" height="10" viewBox="0 0 6 10"><path d="M0.8 1l4 4-4 4" stroke="#a8abb0" stroke-width="1.2" fill="none"/></svg>
<svg style="left:374.5px;top:774px;" width="6" height="10" viewBox="0 0 6 10"><path d="M0.8 1l4 4-4 4" stroke="#a8abb0" stroke-width="1.2" fill="none"/></svg>
<svg style="left:433.6px;top:774px;" width="6" height="10" viewBox="0 0 6 10"><path d="M0.8 1l4 4-4 4" stroke="#a8abb0" stroke-width="1.2" fill="none"/></svg>
<svg style="left:449px;top:771px;" width="16" height="16" viewBox="0 0 16 16"><circle cx="7.5" cy="8.5" r="6.4" fill="#25324d" stroke="#548af7" stroke-width="1.3"/><path d="M10.2 6.6a3.2 3.2 0 1 0 0 3.8" stroke="#548af7" stroke-width="1.3" fill="none"/><path d="M9.5 0.8v7l5.6-3.5z" fill="#253627" stroke="#57965c" stroke-width="1.1" stroke-linejoin="round"/></svg>
<div class="t" style="left:468.5px;top:771.86px;font-size:13.7px;color:#a8abb0;font-weight:normal;">DemoApplication</div>
<div class="t" style="left:809.6px;top:771.86px;font-size:13.7px;color:#a8abb0;font-weight:normal;letter-spacing:-0.4px">7:14</div>
<div class="t" style="left:850.0px;top:771.86px;font-size:13.7px;color:#a8abb0;font-weight:normal;">LF</div>
<div class="t" style="left:881.7px;top:771.86px;font-size:13.7px;color:#a8abb0;font-weight:normal;">UTF-8</div>
<svg style="left:951px;top:771px" width="14" height="14" viewBox="0 0 14 14"><defs><linearGradient id="g4" x1="0" y1="0" x2="1" y2="1"><stop offset="0" stop-color="#c56ce8"/><stop offset="1" stop-color="#5a40d8"/></linearGradient></defs><circle cx="7" cy="7" r="6.4" fill="url(#g4)"/><path d="M4 7q.5-3 4-3 2 .3 1.5 2-.6 2-4 1.5" stroke="#2b2d30" stroke-width="1.2" fill="none"/></svg>
<svg style="left:968px;top:774px" width="86" height="11" viewBox="0 0 86 11"><defs><linearGradient id="g5" gradientUnits="userSpaceOnUse" x1="43" y1="0" x2="85" y2="0"><stop offset="0" stop-color="#5852e8"/><stop offset="1" stop-color="#e05cc8"/></linearGradient></defs><text x="0" y="10" font-family="Liberation Sans" font-weight="bold" font-size="13" fill="#bdbec2" textLength="43" lengthAdjust="spacingAndGlyphs">GIGA</text><text x="43" y="10" font-family="Liberation Sans" font-weight="bold" font-size="13" fill="url(#g5)" textLength="42" lengthAdjust="spacingAndGlyphs">CODE</text></svg>
<div class="t" style="left:1074.5px;top:771.86px;font-size:13.7px;color:#a8abb0;font-weight:normal;letter-spacing:0.4px">Tab*</div>
<svg style="left:1122px;top:772px;" width="15" height="15" viewBox="0 0 15 15"><rect x="1" y="6.5" width="9.5" height="7.5" rx="1.5" stroke="#ced0d6" stroke-width="1.3" fill="none"/><path d="M8 6.5V4.2a2.8 2.8 0 0 1 5.6 0V5.5" stroke="#ced0d6" stroke-width="1.3" fill="none"/><rect x="5" y="9" width="1.5" height="2.5" fill="#8c8e93"/></svg>
<div class="a" style="left:0;top:0;width:1px;height:795px;background:#3f5463"></div>
<div class="a" style="left:1154px;top:0;width:1px;height:795px;background:#3f5463"></div>
<div class="a" style="left:0;top:794px;width:1155px;height:1px;background:#3f5463"></div>
</body></html>
